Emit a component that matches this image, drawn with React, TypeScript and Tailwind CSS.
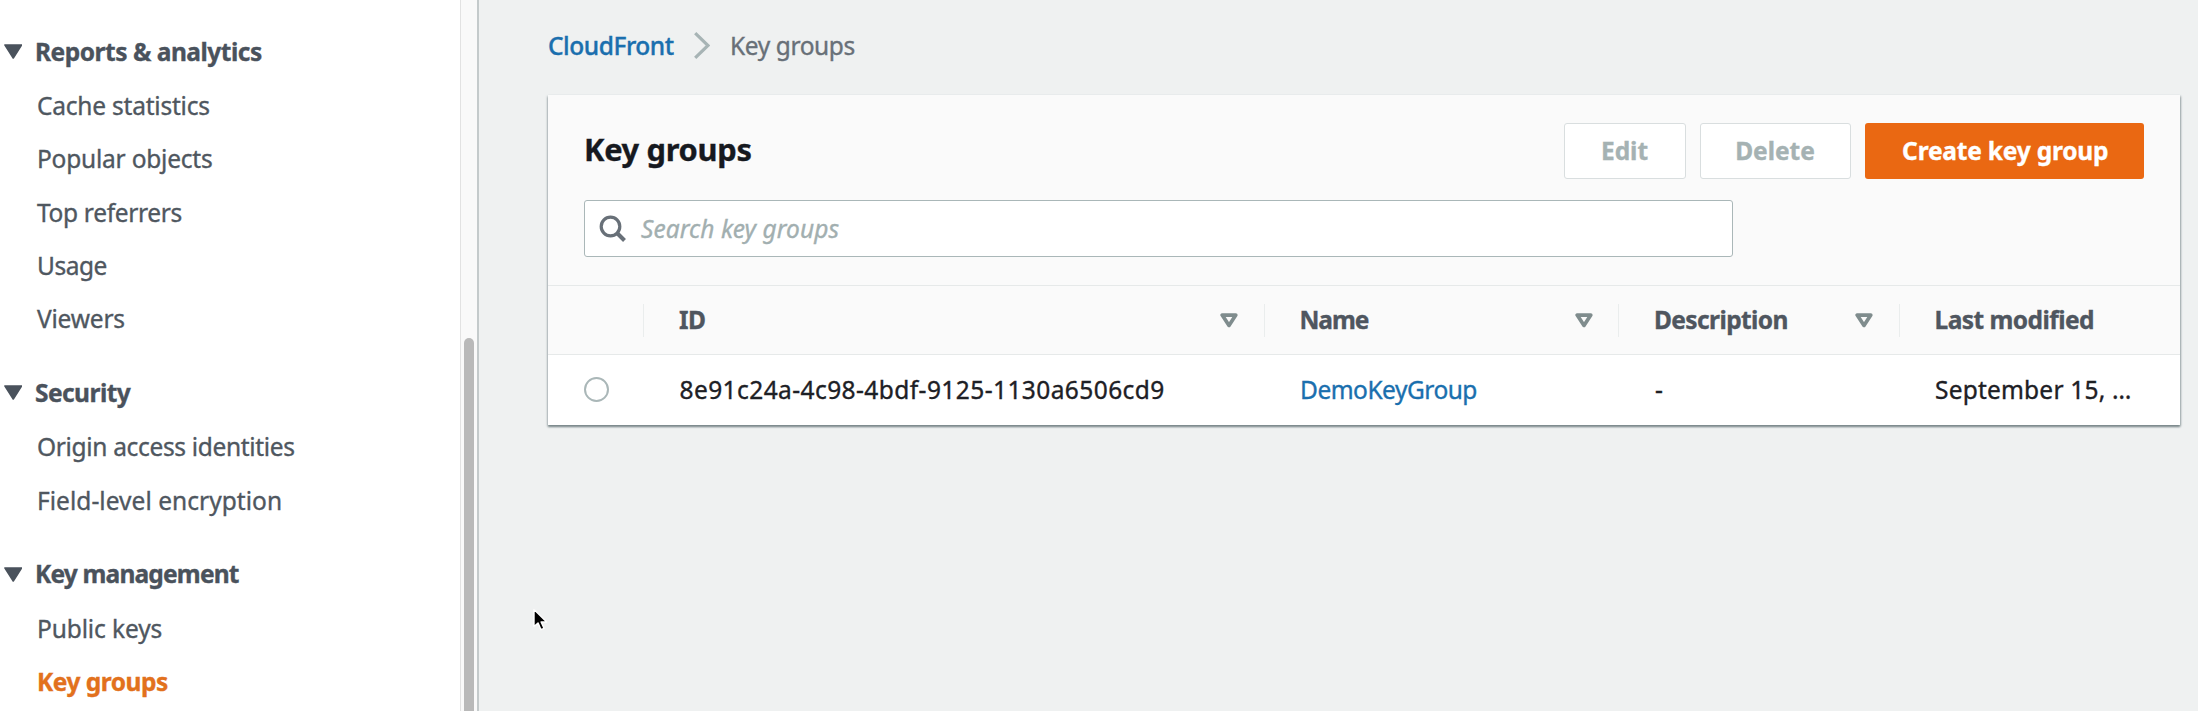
type NavItem = { label: string; tracking: string; active?: boolean };
type NavSection = { title: string; tracking: string; items: NavItem[] };

const SECTIONS: NavSection[] = [
  {
    title: "Reports & analytics",
    tracking: "tracking-[-0.48px]",
    items: [
      { label: "Cache statistics", tracking: "tracking-[-0.22px]" },
      { label: "Popular objects", tracking: "tracking-[-0.22px]" },
      { label: "Top referrers", tracking: "tracking-[-0.33px]" },
      { label: "Usage", tracking: "tracking-[-0.5px]" },
      { label: "Viewers", tracking: "tracking-[-0.2px]" },
    ],
  },
  {
    title: "Security",
    tracking: "tracking-[-0.55px]",
    items: [
      { label: "Origin access identities", tracking: "tracking-[-0.33px]" },
      { label: "Field-level encryption", tracking: "tracking-[0.04px]" },
    ],
  },
  {
    title: "Key management",
    tracking: "tracking-[-0.82px]",
    items: [
      { label: "Public keys", tracking: "tracking-[-0.12px]" },
      { label: "Key groups", tracking: "tracking-[-0.5px]", active: true },
    ],
  },
];

function Sidebar() {
  return (
    <aside className="flex w-[479px] shrink-0 border-r-2 border-[#c4cacb] bg-white">
      <nav className="flex flex-1 flex-col gap-[20.5px] pt-[24.5px]">
        {SECTIONS.map((section) => (
          <section key={section.title}>
            <h2
              className={`flex h-[54.3px] items-center pl-[3.5px] font-bold whitespace-nowrap text-[#4a525c] ${section.tracking}`}
            >
              <svg className="mr-[13px] h-[15px] w-[18.5px]" viewBox="0 0 18.5 15">
                <path
                  d="M1 1h16.5L9.25 14z"
                  fill="#4a525c"
                  stroke="#4a525c"
                  strokeWidth="1.6"
                  strokeLinejoin="round"
                />
              </svg>
              {section.title}
            </h2>
            <ul>
              {section.items.map((item) => (
                <li
                  key={item.label}
                  className={`flex h-[53.3px] items-center pt-px pl-[37px] whitespace-nowrap ${item.tracking} ${
                    item.active ? "font-bold text-[#e2711d]" : "text-[#4f575f]"
                  }`}
                >
                  {item.label}
                </li>
              ))}
            </ul>
          </section>
        ))}
      </nav>
      <div className="flex w-[17.5px] justify-center border-l border-[#e2e2e2] bg-[#f9f9f9] pt-[338px]">
        <div className="h-[480px] w-[10px] rounded-full bg-[#b9b9b9]" />
      </div>
    </aside>
  );
}

function SortIcon() {
  return (
    <svg className="h-[15px] w-[18px] shrink-0" viewBox="0 0 18 15">
      <path
        d="M2.2 2.1h13.6L9 12.4z"
        fill="none"
        stroke="#7f8c8d"
        strokeWidth="3.7"
        strokeLinejoin="round"
      />
    </svg>
  );
}

function HeaderCell({
  label,
  tracking,
  sortable = true,
}: {
  label: string;
  tracking: string;
  sortable?: boolean;
}) {
  return (
    <div className="flex h-[33px] items-center justify-between border-l-[1.5px] border-[#eaeded] pr-[25.5px] pl-[35px]">
      <span className={`whitespace-nowrap ${tracking}`}>{label}</span>
      {sortable && <SortIcon />}
    </div>
  );
}

function KeyGroupsCard() {
  return (
    <section className="h-[329.5px] w-[1632px] bg-white shadow-[0_2px_2px_0_#7b898b,1px_1px_2px_0_#b4bcbe,-1px_1px_2px_0_#d0d5d6]">
      <div className="h-[190px] bg-[#fafafa] px-[36px] pt-[28px]">
        <div className="flex h-[56px] items-center">
          <h1 className="flex-1 pb-[4px] text-[30.8px] font-bold tracking-[-0.3px] text-[#16191f]">
            Key groups
          </h1>
          <div className="flex gap-[14px] font-bold">
            <button className="h-[56px] w-[122px] rounded-[3px] border-[1.5px] border-[#d9dedf] bg-white text-[#a5b2b3]">
              Edit
            </button>
            <button className="h-[56px] w-[151px] rounded-[3px] border-[1.5px] border-[#d9dedf] bg-white text-[#a5b2b3]">
              Delete
            </button>
            <button className="h-[56px] w-[279.5px] rounded-[3px] bg-[#ea6812] pl-[2px] tracking-[-0.2px] text-white">
              Create key group
            </button>
          </div>
        </div>
        <div className="mt-[20.5px] flex h-[57px] w-[1149px] items-center rounded-[3px] border-[1.5px] border-[#aab7b8] bg-white pl-[14px]">
          <svg className="mr-[15px] h-[27px] w-[27px]" viewBox="0 0 27 27" fill="none" stroke="#687078">
            <circle cx="11.5" cy="11.5" r="9.3" strokeWidth="3.2" />
            <path d="M18 18l7.5 7.5" strokeWidth="4" />
          </svg>
          <span className="pt-px tracking-[0.08px] text-[#a2afb0] italic">Search key groups</span>
        </div>
      </div>
      <div className="grid h-[70px] grid-cols-[95px_620.5px_354.5px_280.5px_281.5px] items-center border-y-[1.5px] border-[#e6e9e9] bg-[#fafafa] font-bold text-[#4f565f]">
        <div />
        <HeaderCell label="ID" tracking="tracking-[-0.6px]" />
        <HeaderCell label="Name" tracking="tracking-[-1.1px]" />
        <HeaderCell label="Description" tracking="tracking-[-0.6px]" />
        <HeaderCell label="Last modified" tracking="tracking-[-0.55px]" sortable={false} />
      </div>
      <div className="grid h-[69px] grid-cols-[95px_620.5px_354.5px_280.5px_281.5px] items-center whitespace-nowrap text-[#1d2025]">
        <div className="pl-[35.5px]">
          <div className="size-[25px] rounded-full border-2 border-[#aab7b8] bg-white" />
        </div>
        <div className="pl-[36.5px] tracking-[0.42px]">8e91c24a-4c98-4bdf-9125-1130a6506cd9</div>
        <div className="pl-[36.5px] tracking-[-0.5px] text-[#1a6fae]">DemoKeyGroup</div>
        <div className="pl-[37px]">-</div>
        <div className="pl-[36.5px] tracking-[0.2px]">September 15, …</div>
      </div>
    </section>
  );
}

function Cursor() {
  return (
    <svg className="absolute top-[608px] left-[532px] h-[24px] w-[17px]" viewBox="0 0 17 24">
      <path
        d="M2 1.5v17l4-3.6 3 6.8 3-1.4-2.9-6.3h5.6z"
        fill="#000"
        stroke="#fff"
        strokeWidth="1.4"
        strokeLinejoin="round"
      />
    </svg>
  );
}

export default function App() {
  return (
    <div className="relative flex h-[711px] w-full overflow-hidden bg-[#eff1f1] font-['Noto_Sans',sans-serif] text-[24.5px] leading-[34px] [-webkit-text-stroke:0.35px]">
      <Sidebar />
      <main className="flex-1 pl-[69px]">
        <div className="flex h-[95px] items-start pt-[29px] whitespace-nowrap">
          <span className="w-[146px] font-medium tracking-[-0.45px] text-[#1a6fae]">CloudFront</span>
          <svg
            className="mt-[3px] mr-[20px] h-[27px] w-[16px]"
            viewBox="0 0 16 27"
            fill="none"
            stroke="#a7b4b5"
            strokeWidth="3.2"
          >
            <path d="M1.2 1.2L14 13.5 1.2 25.8" />
          </svg>
          <span className="tracking-[-0.4px] text-[#687078]">Key groups</span>
        </div>
        <KeyGroupsCard />
      </main>
      <Cursor />
    </div>
  );
}
